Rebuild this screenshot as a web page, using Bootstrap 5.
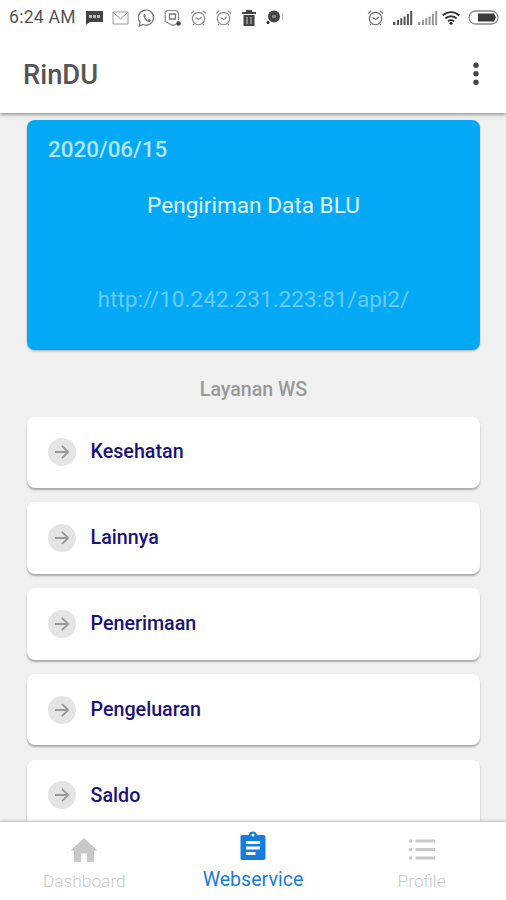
<!DOCTYPE html>
<html lang="id">
<head>
<meta charset="utf-8">
<meta name="viewport" content="width=device-width, initial-scale=1">
<title>RinDU</title>
<link href="https://cdn.jsdelivr.net/npm/bootstrap@5.3.0/dist/css/bootstrap.min.css" rel="stylesheet">
<style>
body{font-family:Roboto,"Noto Sans",sans-serif;background:#f0f0f0;height:900px;line-height:1.2}
svg{display:block;flex:none}
.status-bar{height:35px;padding:0 6px 0 9px;color:#555}
.clock{font-size:17.5px;letter-spacing:.3px;width:77px;color:#555}
.app-bar{height:78px;padding:0 20px 0 23px}
.top-shell{box-shadow:0 1px 4px rgba(0,0,0,.5);z-index:2}
.app-title{font-size:27.3px;color:#555;font-weight:500;padding-top:3px}
.content{padding:7px 26px 0 27px}
.hero{height:230px;background:#03a9f4;border-radius:8px;box-shadow:0 1px 2px rgba(0,0,0,.3);padding:15px 21px 0 21px}
.hero-date{font-size:22.4px;font-weight:500;color:#b3e5fc;line-height:28px}
.hero-title{font-size:22.6px;color:#e1f5fe;line-height:28px;margin-top:29px}
.hero-url{font-size:22.6px;color:#68cbf8;line-height:28px;margin-top:66px}
.section-label{font-size:19.6px;font-weight:500;color:#999;line-height:24px;padding:28px 0 14.5px}
.service{height:71.5px;border-radius:8px;box-shadow:0 2px 2px rgba(0,0,0,.3);padding:0 21px;gap:14.5px;color:#1a1278;font-size:19.7px;font-weight:500}
.service-list{gap:14.3px}
.bottom-nav{height:79px;border-top:1px solid #ccc;box-shadow:0 -1px 2px rgba(0,0,0,.12);z-index:2}
.tab{color:#c8c8c8;font-size:17.3px;line-height:20px;font-weight:300}
.tab svg{height:28px;margin:14px 0 7px}
.tab.current{color:#177ddc;font-size:19.6px;font-weight:400;line-height:24px}
.tab.current svg{height:31px;margin:9px 0 6px}
</style>
</head>
<body class="d-flex flex-column overflow-hidden">
<svg width="0" height="0" class="position-absolute">
<symbol id="arrow" viewBox="0 0 28 28"><circle cx="14" cy="14" r="14" fill="#e4e4e4"/><path d="M7 14h13M14 7.800l6.200 6.200-6.200 6.200" fill="none" stroke="#999" stroke-width="1.800"/></symbol>
<symbol id="alarm" viewBox="0 0 16 16"><g fill="none" stroke="currentColor" stroke-width="1.100"><circle cx="8" cy="9" r="5.800"/><path d="M1 4.200 4 1.500M15 4.200l-3-2.700M5.200 8l3 1.800 3-2.300M4 14l-1 1M12 14l1 1"/></g></symbol>
<symbol id="signal" viewBox="0 0 20 14"><path d="M0 11h2.400v3H0zM4 9h2v5H4zM7.300 7.300h2V14h-2zM10.600 5.500h2V14h-2zM13.900 3h2v11h-2zM17.200 0h2v14h-2z" fill="currentColor"/></symbol>
</svg>
<header class="top-shell bg-white position-relative flex-shrink-0">
<div class="status-bar d-flex align-items-center">
<span class="clock text-nowrap">6:24 AM</span>
<svg width="17" height="16" viewBox="0 0 17 16"><path d="M0 1h17v11H4l-4 3z" fill="#444"/><path d="M3 5h11v3H3z" fill="#bbb"/><path d="M6.500 5v3M10.500 5v3" stroke="#444"/></svg>
<svg class="ms-2" width="19" height="14" viewBox="0 0 19 14"><path d="M2 1h15v12H2zM2 1l7.500 7L17 1" fill="none" stroke="#999"/></svg>
<svg class="ms-2" width="18" height="18" viewBox="0 0 18 18"><path d="M1.300 17l.7-3.800A7.600 7.600 0 1 1 5 15.500z" fill="none" stroke="#777" stroke-width="1.300"/><path d="M5.500 5.200 7 5l1 2.300-1 1.200c.7 1.300 1.600 2 2.800 2.600l1.200-1.200 2 1c0 1.400-.9 2-1.900 2C8 12.600 5 9 5.500 5.200z" fill="#777"/></svg>
<svg class="ms-2" width="18" height="18" viewBox="0 0 18 18"><path d="M14.500 11V3.500L12 1.500H3L1.200 3v9.500L9 16.500l3-1.500" fill="none" stroke="#888" stroke-width="1.200"/><path d="M5.500 5h6v5h-6z" fill="none" stroke="#777" stroke-width="1.300"/><circle cx="14.500" cy="14.500" r="2.300" fill="#444"/></svg>
<svg class="ms-2" width="17" height="17" color="#888"><use href="#alarm"/></svg>
<svg class="ms-2" width="17" height="17" color="#888"><use href="#alarm"/></svg>
<svg class="ms-2" width="18" height="16" viewBox="0 0 18 16"><path d="M2 2h4V0h6v2h4v2H2zM3.500 5h11v11h-11z" fill="#444"/><path d="M7 7v7M11 7v7" stroke="#ccc"/></svg>
<svg class="ms-2" width="18" height="15" viewBox="0 0 18 15"><circle cx="8" cy="6.500" r="6" fill="#444"/><path d="M6 5h4v3H6z" fill="#888"/><circle cx="2" cy="12.500" r="1.500" fill="#222"/><path d="M16.500 3v7" stroke="#bbb"/></svg>
<div class="d-flex align-items-center ms-auto">
<svg width="17" height="17" color="#666"><use href="#alarm"/></svg>
<svg class="ms-1" width="25" height="14" viewBox="-5 0 25 14" color="#555"><use href="#signal" width="20" height="14"/></svg>
<svg width="25" height="14" viewBox="-5 0 25 14" color="#999"><use href="#signal" width="20" height="14"/></svg>
<svg class="ms-1" width="18" height="15" viewBox="0 0 18 15"><g fill="none" stroke="#333" stroke-width="1.900"><path d="M.7 5.500a12 12 0 0 1 16.600 0M3.400 8.500a8 8 0 0 1 11.200 0M6 11.400a4.300 4.300 0 0 1 6 0"/></g><circle cx="9" cy="13.300" r="1.500" fill="#222"/></svg>
<svg class="ms-2" width="32" height="15" viewBox="0 0 32 15"><rect x="1" y="1" width="29" height="13" rx="6.500" fill="#fff" stroke="#888" stroke-width="1.300"/><path d="M10 3.500h16l2 4-2 4H10z" fill="#3b3b3b"/></svg>
</div>
</div>
<div class="app-bar d-flex align-items-center justify-content-between">
<h1 class="app-title mb-0">RinDU</h1>
<svg width="20" height="24" viewBox="0 0 20 24" fill="#444"><circle cx="10" cy="3.300" r="2.700"/><circle cx="10" cy="11.800" r="2.700"/><circle cx="10" cy="20.300" r="2.700"/></svg>
</div>
</header>
<main class="content flex-grow-1 overflow-hidden">
<section class="hero">
<div class="hero-date"><span>2020/06/15</span></div>
<div class="hero-title text-center"><span>Pengiriman Data BLU</span></div>
<div class="hero-url text-center"><span>http://10.242.231.223:81/api2/</span></div>
</section>
<div class="section-label text-center"><span>Layanan WS</span></div>
<div class="service-list d-flex flex-column">
<div class="service bg-white d-flex align-items-center"><svg width="28" height="28"><use href="#arrow"/></svg><span>Kesehatan</span></div>
<div class="service bg-white d-flex align-items-center"><svg width="28" height="28"><use href="#arrow"/></svg><span>Lainnya</span></div>
<div class="service bg-white d-flex align-items-center"><svg width="28" height="28"><use href="#arrow"/></svg><span>Penerimaan</span></div>
<div class="service bg-white d-flex align-items-center"><svg width="28" height="28"><use href="#arrow"/></svg><span>Pengeluaran</span></div>
<div class="service bg-white d-flex align-items-center"><svg width="28" height="28"><use href="#arrow"/></svg><span>Saldo</span></div>
</div>
</main>
<nav class="bottom-nav bg-white d-flex flex-shrink-0 position-relative">
<div class="tab col-4 d-flex flex-column align-items-center"><svg width="28" height="28" viewBox="0 0 28 28"><path d="M11 26v-8.500h6V26h7V14.500h3.500L14 2 .5 14.500H4V26z" fill="currentColor"/></svg><span>Dashboard</span></div>
<div class="tab current col-4 d-flex flex-column align-items-center"><svg width="34" height="31" viewBox="0 0 34 31"><path d="M6.500 4h6.300a4.300 4.300 0 0 1 8.400 0h6.300q2 0 2 2v21q0 2-2 2h-21q-2 0-2-2V6q0-2 2-2z" fill="currentColor"/><circle cx="17" cy="4" r="1.500" fill="#fff"/><path d="M10 10h14v3H10zM10 15.500h14v3H10zM10 21h9.500v3H10z" fill="#fff"/></svg><span>Webservice</span></div>
<div class="tab col-4 d-flex flex-column align-items-center"><svg width="28" height="28" viewBox="0 0 28 28" fill="currentColor"><path d="M1 3.500h3v3H1zM7.500 3.500H27v3H7.500zM1 12h3v3H1zM7.500 12H27v3H7.500zM1 20.500h3v3H1zM7.500 20.500H27v3H7.500z"/></svg><span>Profile</span></div>
</nav>
<script src="https://cdn.jsdelivr.net/npm/bootstrap@5.3.0/dist/js/bootstrap.bundle.min.js"></script>
</body>
</html>
